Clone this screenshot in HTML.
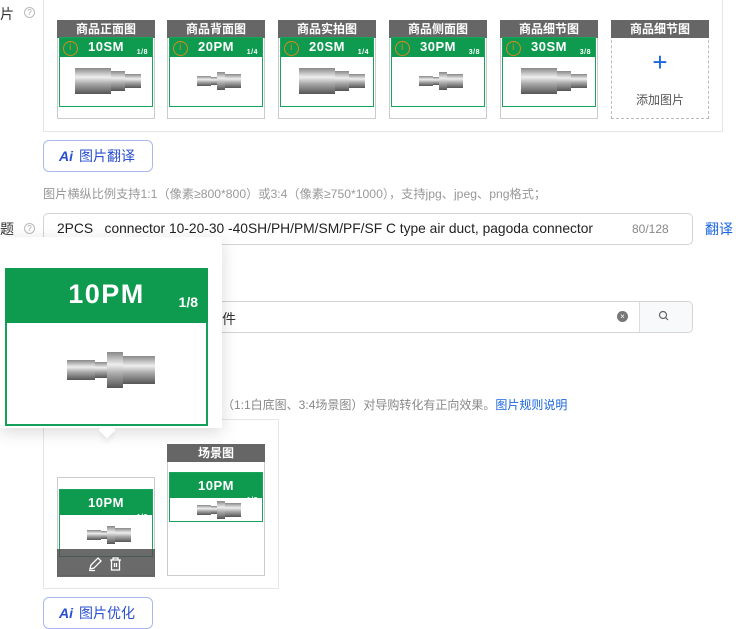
<!DOCTYPE html>
<html><head><meta charset="utf-8"><style>
*{box-sizing:border-box;margin:0;padding:0}
body{width:736px;height:628px;overflow:hidden;background:#fff;position:relative;font-family:"Liberation Sans","Noto Sans CJK SC",sans-serif;color:#333}
.a{position:absolute}
.q{position:absolute;width:11px;height:11px;border:1px solid #bbb;border-radius:50%;font-size:8px;color:#aaa;text-align:center;line-height:9px}
.card{position:absolute;width:98px;height:99px;border:1px solid #ccc;background:#fff}
.hd{position:absolute;left:-1px;top:-1px;width:98px;height:18px;background:#666;color:#fff;font-size:12px;font-weight:bold;text-align:center;line-height:18px}
.pic{position:absolute;left:1px;top:16px;width:94px;height:70px;border:1.5px solid #1aa35a;background:#fff}
.gr{position:absolute;left:0;top:0;right:0;height:19px;background:#0e9a4f;color:#fff;font-weight:bold;font-size:13px;text-align:center;line-height:17px;letter-spacing:.5px}
.gr small{position:absolute;right:4px;top:6px;font-size:7px}
.ic{position:absolute;left:3px;top:3px;width:15px;height:15px;border:1.5px solid #d9891a;border-radius:50%;color:#d9891a;font-size:10px;line-height:12px;text-align:center;font-weight:normal}
.btn{position:absolute;width:110px;height:32px;border:1px solid #aab8ee;border-radius:6px;color:#2a4fd0;font-size:14px;line-height:30px;padding-left:15px}
.btn b{font-style:italic;font-weight:900;margin-right:6px}
.inp{position:absolute;border:1px solid #d4d4d4;border-radius:5px;background:#fff}
</style></head><body>
<svg width="0" height="0" style="position:absolute"><defs>
<linearGradient id="m" x1="0" y1="0" x2="0" y2="1"><stop offset="0" stop-color="#888"/><stop offset=".35" stop-color="#eee"/><stop offset=".6" stop-color="#aaa"/><stop offset="1" stop-color="#555"/></linearGradient>
<g id="pm"><rect x="0" y="4" width="14" height="10" fill="url(#m)"/><rect x="14" y="5" width="6" height="8" fill="url(#m)"/><rect x="20" y="0" width="8" height="18" fill="url(#m)"/><rect x="28" y="2" width="16" height="14" fill="url(#m)"/></g>
<g id="sm"><rect x="0" y="0" width="36" height="26" fill="url(#m)"/><rect x="36" y="3" width="14" height="20" fill="url(#m)"/><rect x="50" y="6" width="16" height="14" fill="url(#m)"/></g>
</defs></svg>

<div class="a" style="left:0;top:4px;font-size:14px">片</div><div class="q" style="left:24px;top:7px">?</div>
<div class="a" style="left:43px;top:-5px;width:680px;height:137px;border:1px solid #e6e6e6"></div>

<div class="card" style="left:57px;top:20px"><div class="hd">商品正面图</div><div class="pic"><div class="gr">10SM<small>1/8</small><span class="ic">i</span></div><svg class="a" style="left:15px;top:30px" width="66" height="26"><use href="#sm"/></svg></div></div>
<div class="card" style="left:167px;top:20px"><div class="hd">商品背面图</div><div class="pic"><div class="gr">20PM<small>1/4</small><span class="ic">i</span></div><svg class="a" style="left:27px;top:34px" width="44" height="18"><use href="#pm"/></svg></div></div>
<div class="card" style="left:278px;top:20px"><div class="hd">商品实拍图</div><div class="pic"><div class="gr">20SM<small>1/4</small><span class="ic">i</span></div><svg class="a" style="left:18px;top:30px" width="66" height="26"><use href="#sm"/></svg></div></div>
<div class="card" style="left:389px;top:20px"><div class="hd">商品侧面图</div><div class="pic"><div class="gr">30PM<small>3/8</small><span class="ic">i</span></div><svg class="a" style="left:27px;top:34px" width="44" height="18"><use href="#pm"/></svg></div></div>
<div class="card" style="left:500px;top:20px"><div class="hd">商品细节图</div><div class="pic"><div class="gr">30SM<small>3/8</small><span class="ic">i</span></div><svg class="a" style="left:18px;top:30px" width="66" height="26"><use href="#sm"/></svg></div></div>
<div class="card" style="left:611px;top:20px;border:1px dashed #bbb"><div class="hd">商品细节图</div><div class="a" style="left:0;width:96px;top:28px;text-align:center;color:#1a66e0;font-size:26px;line-height:26px">+</div><div class="a" style="left:0;width:96px;top:70px;text-align:center;font-size:12px;color:#555">添加图片</div></div>

<div class="btn" style="left:43px;top:140px"><b>Ai</b>图片翻译</div>
<div class="a" style="left:43px;top:184px;font-size:12.2px;color:#999">图片横纵比例支持1:1（像素≥800*800）或3:4（像素≥750*1000），支持jpg、jpeg、png格式；</div>

<div class="a" style="left:0;top:219px;font-size:14px">题</div><div class="q" style="left:24px;top:223px">?</div>
<div class="inp" style="left:43px;top:213px;width:650px;height:32px"></div>
<div class="a" style="left:57px;top:221px;font-size:13.8px;color:#222">2PCS&nbsp;&nbsp; connector 10-20-30 -40SH/PH/PM/SM/PF/SF C type air duct, pagoda connector</div>
<div class="a" style="left:632px;top:222px;font-size:12px;color:#888">80/128</div>
<div class="a" style="left:705px;top:219px;font-size:14px;color:#1a66e0">翻译</div>

<div class="inp" style="left:140px;top:301px;width:553px;height:32px"></div>
<div class="a" style="left:639px;top:302px;width:53px;height:30px;background:#f8f9fb;border-left:1px solid #ddd;border-radius:0 5px 5px 0"></div>
<svg class="a" style="left:658px;top:310px" width="12" height="12"><circle cx="5" cy="5" r="3.5" fill="none" stroke="#666" stroke-width="1.2"/><path d="M7.5 7.5L10 10" stroke="#666" stroke-width="1.2"/></svg>
<div class="a" style="left:617px;top:311px;width:11px;height:11px;border-radius:50%;background:#777;color:#fff;font-size:8px;line-height:11px;text-align:center">×</div>
<div class="a" style="left:222px;top:309px;font-size:14px">件</div>
<div class="a" style="left:222px;top:396px;font-size:12px;color:#888">（1:1白底图、3:4场景图）对导购转化有正向效果。<span style="color:#1a66e0">图片规则说明</span></div>

<div class="a" style="left:43px;top:419px;width:236px;height:170px;border:1px solid #e6e6e6"></div>
<div class="card" style="left:57px;top:477px"><div class="pic" style="top:11px;height:68px"><div class="gr" style="height:25px;line-height:26px">10PM<small style="top:15px">1/8</small></div><svg class="a" style="left:27px;top:36px" width="44" height="18"><use href="#pm"/></svg></div>
<div class="a" style="left:-1px;top:71px;width:98px;height:28px;background:rgba(80,80,80,.85)"></div>
<svg class="a" style="left:30px;top:78px" width="40" height="16" fill="none" stroke="#fff" stroke-width="1.3"><path d="M2 13L3 9L10 2L13 5L6 12Z M1 14.5H7"/><path d="M22 4H33M25 4V2H30V4M23.5 4V14H31.5V4M26.5 7V11M28.5 7V11"/></svg></div>
<div class="card" style="left:167px;top:444px;height:132px"><div class="hd">场景图</div><div class="pic" style="top:27px;height:50px"><div class="gr" style="height:25px;line-height:26px">10PM<small style="top:15px">1/8</small></div><svg class="a" style="left:27px;top:28px" width="44" height="18"><use href="#pm"/></svg></div></div>

<div class="a" style="left:0;top:237px;width:222px;height:191px;background:#fff;box-shadow:0 4px 16px rgba(0,0,0,.15)"></div>
<div class="a" style="left:101px;top:424px;width:12px;height:12px;background:#fff;transform:rotate(45deg);box-shadow:3px 3px 5px rgba(0,0,0,.06)"></div>
<div class="a" style="left:5px;top:268px;width:203px;height:158px;border:2px solid #12a05a;background:#fff">
<div class="a" style="left:-2px;top:-2px;width:203px;height:55px;background:#0e9a4f;color:#fff;font-weight:bold;font-size:27px;text-align:center;line-height:52px;letter-spacing:1.5px">10PM<span class="a" style="right:10px;top:24px;font-size:14px;line-height:20px;letter-spacing:0">1/8</span></div>
<svg class="a" style="left:60px;top:80px" width="88" height="40" viewBox="0 0 44 18"><use href="#pm"/></svg></div>

<div class="btn" style="left:43px;top:597px"><b>Ai</b>图片优化</div>
</body></html>
